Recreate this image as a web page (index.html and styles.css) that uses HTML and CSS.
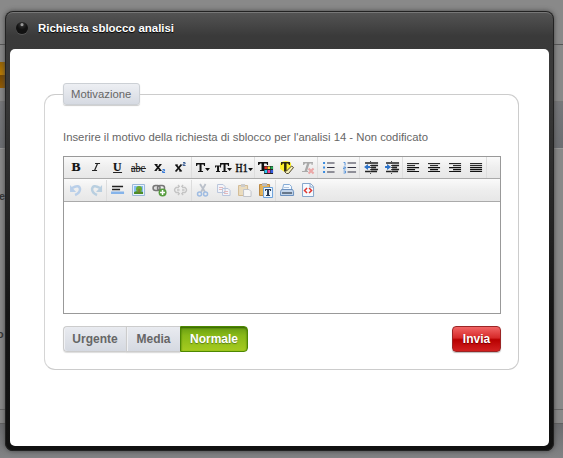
FILE: index.html
```
<!DOCTYPE html>
<html lang="it">
<head>
<meta charset="utf-8">
<title>Richiesta sblocco analisi</title>
<link rel="stylesheet" href="styles.css">
</head>
<body>
<div class="backdrop"><i class="tab"></i><i class="band"></i><i class="line line-a"></i><i class="line line-b"></i><i class="foot"></i><b class="under under-e">e</b><b class="under under-o">o</b></div>
<main class="modal">
<header class="titlebar"><i class="close"></i><h1>Richiesta sblocco analisi</h1></header>
<section class="content">
<fieldset class="panel">
<legend>Motivazione</legend>
<p>Inserire il motivo della richiesta di sblocco per l'analisi 14 - Non codificato</p>
<div class="editor">
<div class="toolbar">
<div class="group">
<svg viewBox="0 0 21 21"><text x="6.500" y="14" class="serif bold" textLength="9" lengthAdjust="spacingAndGlyphs">B</text></svg>
<svg viewBox="0 0 21 21"><path d="M9 6.500h5M6 13.500h5M11.500 6.500l-3 7" stroke="#222" stroke-width="1.200"/></svg>
<svg viewBox="0 0 21 21"><text x="6" y="13.500" class="serif bold" textLength="8.500" lengthAdjust="spacingAndGlyphs">U</text><path d="M6 15.500h9" stroke="#222"/></svg>
<svg viewBox="0 0 21 21"><text x="3" y="14.500" class="serif" textLength="14" lengthAdjust="spacingAndGlyphs">abc</text><path d="M3 11.500h15" stroke="#222"/></svg>
<svg viewBox="0 0 21 21"><path d="M6.500 7.500l5 6m0-6l-5 6" stroke="#111" stroke-width="1.800"/><path d="M5.500 7.500h3m2 0h2M5.500 13.500h2m2 0h3" stroke="#111"/><path d="M13.500 12.500h2v1.500h-2v1.500h2.500" stroke="#3478d8" fill="none"/></svg>
<svg viewBox="0 0 21 21"><path d="M6 8l5 6m0-6l-5 6" stroke="#111" stroke-width="1.800"/><path d="M5 8h3m2 0h2M5 14h2m2 0h3" stroke="#111"/><path d="M13 5.500h2V7h-2v1.500h2.500" stroke="#3b5e94" fill="none"/></svg>
</div>
<div class="group">
<svg viewBox="0 0 21 21"><path d="M4 6h9v3h-1l-.5-1.500H9.500V14H11v1H6v-1h1.500V7.500h-2L5 9H4z" fill="#111"/><path d="M13 11h5l-2.500 3z" fill="#111"/></svg>
<svg viewBox="0 0 21 21"><path d="M2 8.500h6v2H7v-1H6V14h1v1H3v-1h1V9.500H3v1H2zM7 6h9v3h-1l-.5-1.500h-2V14H14v1H9v-1h1.500V7.500h-2L8 9H7z" fill="#111"/><path d="M14 11h5l-2.500 3z" fill="#111"/></svg>
<svg viewBox="0 0 21 21"><text x="1.500" y="14.500" class="serif semi" textLength="12" lengthAdjust="spacingAndGlyphs">H1</text><path d="M14 11h5l-2.500 3z" fill="#111"/></svg>
</div>
<div class="group">
<svg viewBox="0 0 21 21"><path d="M3 5h10v3h-1l-.5-1.500H9V14H6.500V6.500H5L4 8H3zM5 13h5v1H5z" fill="#111"/><path d="M9 9h9v8H9z" fill="#222"/><path d="M9.500 9.500H12V12H9.500z" fill="#ee3029"/><path d="M12.500 9.500H15V12h-2.500z" fill="#ffd23c"/><path d="M15.500 9.500H18V12h-2.500z" fill="#24ab54"/><path d="M9.500 13H12v3H9.500z" fill="#28c5ef"/><path d="M12.500 13H15v3h-2.500z" fill="#e73f9c"/><path d="M15.500 13H18v3h-2.500z" fill="#375de0"/></svg>
<svg viewBox="0 0 21 21"><path d="M4 6q6-4 11 0v5l-5 5-6-4z" fill="#fff22b"/><path d="M5 5h9v3h-1l-1-1.500h-1.500V14H8V6.500H6.500L6 8H5z" fill="#302a10"/><path d="M8.500 14.500l2 2h2l5-6-2-1.500-5 5z" fill="#f5efb5" stroke="#514a35"/></svg>
<svg viewBox="0 0 21 21"><path d="M6 5h10l-.5 3h-1V6.500H12.500L10 14h1v1H5v-1h2.500L10 6.500H8L7 8H6z" fill="#aaa"/><path d="M11.500 11.500l5 5m0-5l-5 5" stroke="#eaa7a7" stroke-width="2"/></svg>
</div>
<div class="group">
<svg viewBox="0 0 21 21"><path d="M5 5h2v2H5zm0 4.500h2v2H5zm0 4.500h2v2H5z" fill="#398be0"/><path d="M9 6h7.500M9 10.500h7.500M9 15h7.500" stroke="#334" stroke-width="1.200"/></svg>
<svg viewBox="0 0 21 21"><path d="M4.500 5.500H6v3M4.500 10h2v1h-2v1h2M4.500 14h2v2h-2" stroke="#5793da" fill="none"/><path d="M8.500 6h8.500M8.500 10.500h8.500M8.500 15h8.500" stroke="#334" stroke-width="1.200"/></svg>
</div>
<div class="group">
<svg viewBox="0 0 21 21"><path d="M5 6h13M11 8.500h7M11 10.500h5M11 12.500h7M5 14.500h12" stroke="#222" stroke-width="1.500"/><path d="M10.500 4v13" stroke="#444" stroke-dasharray="1 1"/><path d="M8 7l-4 3 4 3v-2h2V9H8z" fill="#2e73c8"/></svg>
<svg viewBox="0 0 21 21"><path d="M5 6h13M11 8.500h7M11 10.500h5M11 12.500h7M5 14.500h12" stroke="#222" stroke-width="1.500"/><path d="M10.500 4v13" stroke="#444" stroke-dasharray="1 1"/><path d="M6 7l4 3-4 3v-2H4V9h2z" fill="#2e73c8"/></svg>
</div>
<div class="group">
<svg viewBox="0 0 21 21"><path d="M4 6h12v1H4zM4 8h8v1H4zM4 10h12v1H4zM4 12h8v1H4zM4 14h12v1H4z" fill="#111"/><path d="M4 7h12M4 9h8M4 11.500h12M4 13.500h8" class="shade"/></svg>
<svg viewBox="0 0 21 21"><path d="M4 6h12v1H4zM6 8h8v1H6zM4 10h12v1H4zM6 12h8v1H6zM4 14h12v1H4z" fill="#111"/><path d="M4 7h12M6 9h8M4 11.500h12M6 13.500h8" class="shade"/></svg>
<svg viewBox="0 0 21 21"><path d="M4 6h12v1H4zM8 8h8v1H8zM4 10h12v1H4zM8 12h8v1H8zM4 14h12v1H4z" fill="#111"/><path d="M4 7h12M8 9h8M4 11.500h12M8 13.500h8" class="shade"/></svg>
<svg viewBox="0 0 21 21"><path d="M4 6h12v1H4zM4 8h12v1H4zM4 10h12v1H4zM4 12h12v1H4zM4 14h12v1H4z" fill="#111"/><path d="M4 7h12M4 9h12M4 11.500h12M4 13.500h12" class="shade"/></svg>
</div>
</div>
<div class="toolbar second">
<div class="group">
<svg viewBox="0 0 21 21"><path d="M7 8q7-4 8 1 0 4-5 6" fill="none" stroke="#b9cfe9" stroke-width="2.500"/><path d="M5 5v7h6z" fill="#b9cfe9"/></svg>
<svg viewBox="0 0 21 21"><path d="M14 8Q7 4 6 9q0 4 5 6" fill="none" stroke="#b9cfe0" stroke-width="2.500"/><path d="M16 5v7h-6z" fill="#b9cfe0"/></svg>
</div>
<div class="group">
<svg viewBox="0 0 21 21"><path d="M5 6.500h11M5 9.500h8" stroke="#222" stroke-width="1.500"/><path d="M4 11.500h13V14H4z" fill="#86b4ea"/></svg>
<svg viewBox="0 0 21 21"><path d="M4.500 4.500h12v11h-12z" fill="#e7f2ff" stroke="#9bb7d7"/><path d="M6 6h9v8H6z" fill="#83bdf2"/><path d="M6 12q4-2 9 0v2H6z" fill="#4c8d27"/><circle cx="11" cy="9" r="3" fill="#6caa31"/><path d="M11 9v4" stroke="#876434"/></svg>
<svg viewBox="0 0 21 21"><rect x="4" y="5.500" width="7" height="5" rx="2.500" fill="#ddd" stroke="#777" stroke-width="1.500"/><rect x="8.500" y="5.500" width="7" height="5" rx="2.500" fill="none" stroke="#777" stroke-width="1.500"/><circle cx="13.500" cy="12.500" r="4" fill="#579d3f"/><path d="M11 12.500h5M13.500 10v5" stroke="#fff" stroke-width="1.500"/></svg>
<svg viewBox="0 0 21 21"><path d="M9 7.500H6q-3 2.500 0 5h3m3-5h3q3 2.500 0 5h-3M7 10h2.500M12 10h2.500M8 5l1.500 2M13 5l-1.500 2M8 15l1.500-2M13 15l-1.500-2" fill="none" stroke="#c4c4c4" stroke-width="1.500"/></svg>
</div>
<div class="group">
<svg viewBox="0 0 21 21"><path d="M8 4l5 8M13.500 4L9 12" stroke="#bac0ca" stroke-width="1.800"/><circle cx="7.500" cy="14" r="2" fill="none" stroke="#9fbce2" stroke-width="1.500"/><circle cx="13.500" cy="14" r="2" fill="none" stroke="#9fbce2" stroke-width="1.500"/></svg>
<svg viewBox="0 0 21 21"><path d="M4.500 4.500H10l2 2v6H4.500zM9.500 8.500H15l2 2v5H9.500z" fill="#f3f5fa" stroke="#b9c5dc"/><path d="M6 7.500h4M6 9.500h3M11 11.500h4M11 13.500h4" stroke="#e3b8bc"/></svg>
<svg viewBox="0 0 21 21"><path d="M4.500 5.500h9v10h-9z" fill="#eadcbf" stroke="#d3bb94"/><path d="M7 4h4v3H7z" fill="#ccc"/><path d="M9.500 9.500H15l2 2v5H9.500z" fill="#f6f6f6" stroke="#c1c4ca"/></svg>
<svg viewBox="0 0 21 21"><path d="M4.500 4.500h10v11h-10z" fill="#e5b359" stroke="#b98640"/><path d="M7 3h5v3H7z" fill="#bbb"/><path d="M8.500 7.500h9v10h-9z" fill="#edf6ff" stroke="#6aa0da"/><path d="M10 9h6v2h-1v-1h-1v5h1v1h-4v-1h1v-5h-1v1h-1z" fill="#263953"/></svg>
</div>
<div class="group last">
<svg viewBox="0 0 21 21"><path d="M7.500 4.500h6l2 2v3h-9z" fill="#f3f9ff" stroke="#85abd5"/><path d="M5.500 9.500h11l1 2v4h-13v-4z" fill="#c2d4ea" stroke="#6c91bf"/><path d="M6 12h10v2H6z" fill="#68788b"/><path d="M8 7.500h5" stroke="#b2c5dd"/></svg>
<svg viewBox="0 0 21 21"><path d="M5.500 3.500h8l3 3v10h-11z" fill="#f5faff" stroke="#86a5ca"/><path d="M13 4v3h3" fill="none" stroke="#86a5ca"/><path d="M10 8l-2.500 2.500L10 13m2-5l2.500 2.500L12 13" fill="none" stroke="#e0362e" stroke-width="1.500"/></svg>
</div>
</div>
<div class="editarea" contenteditable="true"></div>
</div>
<div class="actions">
<div class="segmented"><button>Urgente</button><button>Media</button><button class="active">Normale</button></div>
<button class="submit">Invia</button>
</div>
</fieldset>
</section>
</main>
</body>
</html>
```
FILE: styles.css
```
* { box-sizing: border-box; }
body {
  margin: 0;
  width: 563px;
  height: 458px;
  overflow: hidden;
  padding: 11px 9px 7px 5px;
  background: #898989;
  font-family: "Liberation Sans", Arial, sans-serif;
  font-size: 12px;
  color: #666;
}
.backdrop { position: absolute; inset: 0; overflow: hidden; }
.backdrop i, .under { position: absolute; left: 0; width: 100%; }
.backdrop .tab { top: 62px; width: 8px; height: 26px; background: linear-gradient(#966300, #b97a00 48%, #774800 52%, #945b00); }
.band { top: 101px; height: 48px; border-top: 1px solid #777; border-bottom: 1px solid #999; background: linear-gradient(#76777a, #6c6e72); }
.line { height: 1px; background: #555; }
.line-a { top: 44px; }
.line-b { top: 409px; background: #666; }
.foot { top: 423px; height: 35px; border-top: 1px solid #606060; background: linear-gradient(#6b6c6f, #828385); }
.under { color: #333; font-size: 11px; line-height: 14px; }
.under-e { top: 189px; left: -1px; }
.under-o { top: 327px; left: -3px; }
.modal {
  position: relative;
  width: 549px;
  height: 440px;
  padding: 0 5px 5px;
  border-radius: 8px;
  background: linear-gradient(#555, #3a3a3a 25px, #383838 90px, #151515 300px, #111);
  box-shadow: inset 0 0 0 1px #222, inset 0 2px 0 #777, 0 0 5px #444;
}
.titlebar { height: 38px; display: flex; align-items: center; gap: 10px; padding: 0 6px 4px; }
.titlebar h1 { margin: 0; color: #fff; font-size: 11.450px; text-shadow: 0 1px 1px #000; }
.close { width: 12px; height: 12px; border-radius: 50%; background: radial-gradient(circle at 50% 22%, #999 0 1px, #292929 2px, #111 5px); box-shadow: 0 1px #555; }
.content { height: 397px; padding: 34px 30px 0 34px; background: #fff; border-radius: 5px; }
.panel {
  position: relative;
  width: 475px;
  height: 287px;
  margin: 0;
  padding: 25px 17px 0 18px;
  border: 1px solid #ccc;
  border-left-color: #d5d5d5;
  border-radius: 11px;
}
.panel legend {
  width: 77px;
  height: 22px;
  padding: 0 0 0 7px;
  border: 1px solid #ccd0d5;
  border-radius: 3px;
  background: linear-gradient(#edeff3, #d6dae2);
  font-size: 11.300px;
  line-height: 20px;
  box-shadow: 0 1px 1px #ccc;
}
.panel p { margin: 0; height: 26px; line-height: 14px; font-size: 11.320px; white-space: nowrap; }
.editor { width: 438px; height: 158px; border: 1px solid #999; background: #fff; }
.toolbar { display: flex; height: 22px; padding-left: 1px; background: linear-gradient(#fafafa, #eee 50%, #e7e7e7); border-bottom: 1px solid #aaa; }
.second { height: 23px; padding-top: 1px; }
.group { display: flex; height: 21px; border-right: 1px solid #ddd; }
.group svg { width: 21.100px; height: 21px; flex: none; }
.group svg:last-child { margin-right: -1px; }
.last { border-right: 0; }
.serif { font-family: "Liberation Serif", serif; font-size: 12px; fill: #111; stroke: #111; stroke-width: .2; }
.bold { font-weight: bold; }
.semi { stroke-width: .5; }
.shade { fill: none; stroke: #777; stroke-width: 1; opacity: .5; }
.editarea { height: 111px; }
.actions { display: flex; justify-content: space-between; margin-top: 12px; }
.segmented { display: flex; }
button {
  height: 26px;
  margin: 0;
  padding: 0;
  border: 1px solid #ccc;
  background: linear-gradient(#e9ebf0, #d5d9e1);
  color: #666;
  font: bold 12px "Liberation Sans", Arial, sans-serif;
}
.segmented button { width: 63px; border-right: 0; box-shadow: inset 1px 0 #f0f1f4, 0 1px 1px #ddd; }
.segmented button:first-child { border-radius: 4px 0 0 4px; }
.segmented button:nth-child(2) { width: 54px; }
.segmented .active { width: 68px; border: 1px solid #4d8800; border-radius: 0 4px 4px 0; color: #fff; background: linear-gradient(#679c12, #88b918 35%, #a6cb20); box-shadow: inset 0 1px 2px #335f00; text-shadow: 0 1px 1px #587a19; }
.submit { width: 49px; margin-right: 0; border-color: #9b2525; border-radius: 4px; color: #fff; background: linear-gradient(#f16565, #d62929 45%, #b80000 53%, #d22020); box-shadow: 0 1px 1px #bbb; text-shadow: 0 1px 1px #700; }
```
